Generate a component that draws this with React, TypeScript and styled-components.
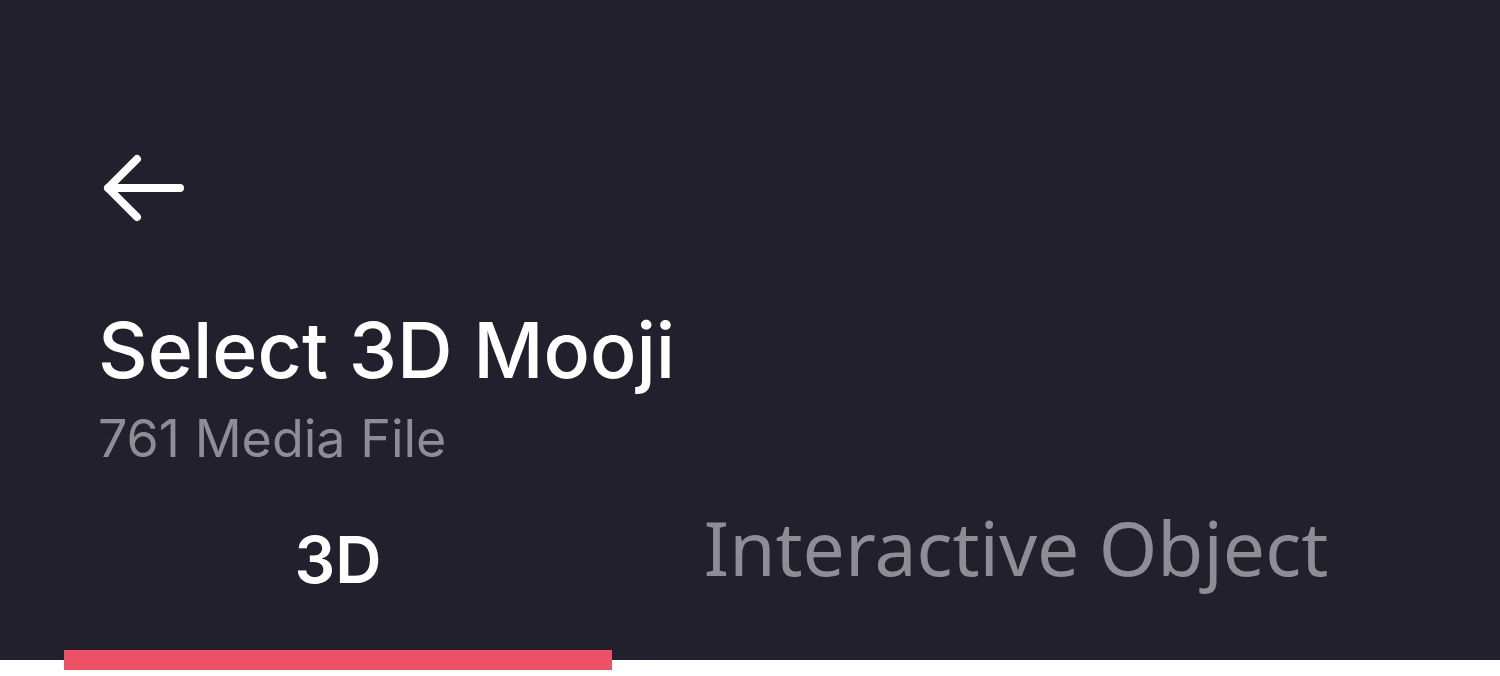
import React from "react";
import styled, { createGlobalStyle } from "styled-components";

const Global = createGlobalStyle`
  html, body { margin: 0; padding: 0; background: #ffffff; }
  body { font-family: Inter, "Noto Sans", sans-serif; min-height: 676px; }
  * { box-sizing: border-box; }
`;

const Page = styled.div`
  display: flex;
  flex-direction: column;
  min-height: 676px;
  background: #ffffff;
`;

const Header = styled.header`
  height: 660px;
  background: #22202d;
  display: flex;
  flex-direction: column;
  overflow: visible;
  flex-shrink: 0;
  & > * { flex-shrink: 0; }
`;

const BackButton = styled.button`
  margin: 150px 0 0 100px;
  width: 88px;
  height: 76px;
  padding: 0;
  border: none;
  background: transparent;
  display: flex;
  cursor: pointer;
`;

const TitleBlock = styled.div`
  margin: 76px 0 0 98px;
  display: flex;
  flex-direction: column;
`;

const Title = styled.h1`
  margin: 0;
  font-family: Inter, sans-serif;
  font-weight: 500;
  font-size: 77px;
  line-height: 96px;
  color: #ffffff;
`;

const Subtitle = styled.div`
  margin-top: 9px;
  font-family: Inter, sans-serif;
  font-weight: 400;
  font-size: 52px;
  line-height: 64px;
  color: #8e8d95;
`;

const Tabs = styled.nav`
  margin: 39px 0 0 64px;
  height: 160px;
  display: flex;
  align-items: stretch;
`;

const Tab = styled.div<{ $active?: boolean; $width: number }>`
  width: ${(p) => p.$width}px;
  display: flex;
  flex-direction: column;
  align-items: center;
  color: ${(p) => (p.$active ? "#ffffff" : "#8e8d95")};
  font-family: ${(p) => (p.$active ? "Inter, sans-serif" : '"Noto Sans", sans-serif')};
  font-weight: ${(p) => (p.$active ? 600 : 400)};
  font-size: ${(p) => (p.$active ? 64 : 75)}px;
  line-height: 1;
`;

const TabLabel = styled.span<{ $offset: number }>`
  padding-top: ${(p) => p.$offset}px;
  flex: 1;
  white-space: nowrap;
`;

const Indicator = styled.div<{ $active?: boolean }>`
  position: relative;
  z-index: 1;
  height: 20px;
  flex-shrink: 0;
  align-self: stretch;
  background: ${(p) => (p.$active ? "#ee5064" : "transparent")};
`;

export default function App() {
  return (
    <>
      <Global />
      <Page>
        <Header>
          <BackButton aria-label="Back">
            <svg width="88" height="76" viewBox="0 0 88 76" fill="none">
              <path
                d="M80 38H8M37 9L8 38L37 67"
                stroke="#ffffff"
                strokeWidth="8"
                strokeLinecap="round"
                strokeLinejoin="round"
              />
            </svg>
          </BackButton>
          <TitleBlock>
            <Title>Select 3D Mooji</Title>
            <Subtitle>761 Media File</Subtitle>
          </TitleBlock>
          <Tabs>
            <Tab $active $width={548}>
              <TabLabel $offset={18}>3D</TabLabel>
              <Indicator $active />
            </Tab>
            <Tab $width={808}>
              <TabLabel $offset={0}>Interactive Object</TabLabel>
              <Indicator />
            </Tab>
          </Tabs>
        </Header>
      </Page>
    </>
  );
}
